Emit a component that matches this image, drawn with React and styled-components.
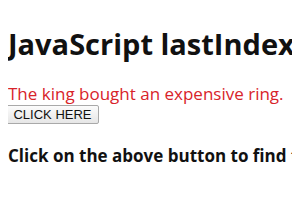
import React from 'react'
import styled, { createGlobalStyle } from 'styled-components'

const GlobalStyle = createGlobalStyle`
  body {
    margin: 8px;
    background: #ffffff;
    font-family: "Open Sans", "Noto Sans", sans-serif;
    color: #111;
  }
`

const Page = styled.div`
  display: flex;
  flex-direction: column;
  align-items: flex-start;
  white-space: nowrap;
`

const Title = styled.h1`
  margin: 18px 0 0;
  font-size: 29px;
  font-weight: 700;
  line-height: 35px;
`

const Sentence = styled.p`
  margin: 22px 0 0;
  color: #d8232a;
  font-size: 17px;
  line-height: 22px;
`

const Button = styled.button`
  margin: 0 0 0 -2px;
  padding: 1px 6px;
  font-family: "Liberation Sans", Arial, sans-serif;
  font-size: 13px;
  color: #111;
  background: linear-gradient(#fcfcfc, #e6e6e6);
  border: 1px solid #a9a9a9;
  border-radius: 2px;
  width: 93px;
  height: 19px;
  line-height: 15px;
`

const Note = styled.p`
  margin: 21px 0 0;
  font-size: 17px;
  font-weight: 700;
  line-height: 22px;
`

export default function App() {
  return (
    <>
      <GlobalStyle />
      <Page>
        <Title>JavaScript lastIndex</Title>
        <Sentence>The king bought an expensive ring.</Sentence>
        <Button>CLICK HERE</Button>
        <Note>Click on the above button to find the lastIndex</Note>
      </Page>
    </>
  )
}
